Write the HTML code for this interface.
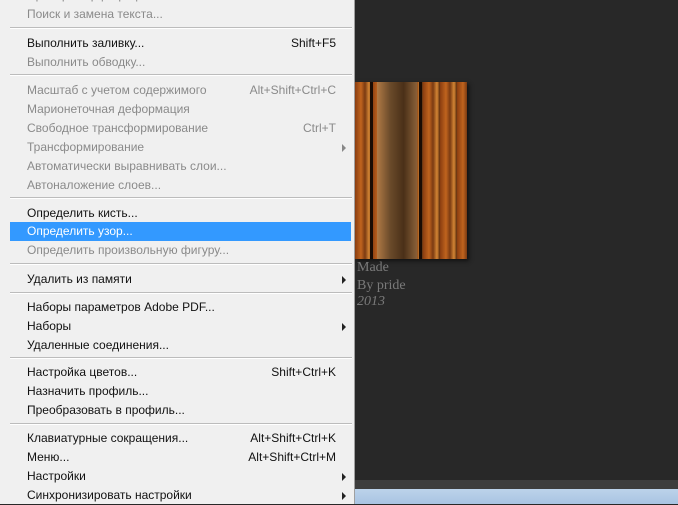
<!DOCTYPE html>
<html><head><meta charset="utf-8"><style>
body{margin:0;width:678px;height:504px;background:#282828;position:relative;overflow:hidden;font-family:"Liberation Sans","Noto Sans CJK SC",sans-serif;font-size:12px}
#menu{position:absolute;left:0;top:0;width:354px;height:504px;background:#f0f0f0;border-right:1px solid #a0a0a0}
.r{position:absolute;left:0;width:354px;height:19px;line-height:19px}
.r span.t{position:absolute;left:27px}
.r span.k{position:absolute;right:18px}
.r.d{color:#8a8a8a}.r{color:#111}
.hl{position:absolute;left:10px;top:222px;width:341px;height:19px;background:#3399ff}
.r.h{color:#fff}
.a{position:absolute;right:8px;top:6px;width:0;height:0;border-left:4px solid #222;border-top:4px solid transparent;border-bottom:4px solid transparent}
.d .a{border-left-color:#888}
.s{position:absolute;left:10px;width:342px;height:1px;background:#bcbcbc;border-bottom:1px solid #fff}
#bar{position:absolute;left:0;top:480px;width:678px;height:9px;background:#3d3d3d}
#task{position:absolute;left:0;top:489px;width:678px;height:15px;background:linear-gradient(#bcd3ea,#a9c4e2)}
#img{position:absolute;left:355px;top:82px;width:112px;height:177px;background:repeating-linear-gradient(90deg,#8a3d10 0,#c0641e 6px,#7a3a12 10px,#d38634 14px,#5a2a0c 17px);box-shadow:2px 2px 4px #111}
.w{position:absolute;left:357px;color:#7a7a7a;font-family:"Liberation Serif",serif;font-size:14px}
</style></head><body>
<div id="img"><div style="position:absolute;left:15px;top:0;width:3px;height:177px;background:#1a0c04"></div><div style="position:absolute;left:64px;top:0;width:3px;height:177px;background:#1a0c04"></div><div style="position:absolute;left:22px;top:0;width:40px;height:177px;background:linear-gradient(90deg,#b07a45,#6a4a2a,#4a3018,#8a6038)"></div></div>
<div class="w" style="top:260px">Made</div>
<div class="w" style="top:278px">By pride</div>
<div class="w" style="top:294px;font-style:italic">2013</div>
<div id="bar"></div><div id="task"></div>
<div id="menu">
<div class="hl"></div>
<div class="r d" style="top:-14px"><span class="t">Проверка орфографии...</span></div>
<div class="r d" style="top:5px"><span class="t">Поиск и замена текста...</span></div>
<div class="s" style="top:27px"></div>
<div class="r" style="top:34px"><span class="t">Выполнить заливку...</span><span class="k">Shift+F5</span></div>
<div class="r d" style="top:53px"><span class="t">Выполнить обводку...</span></div>
<div class="s" style="top:74px"></div>
<div class="r d" style="top:81px"><span class="t">Масштаб с учетом содержимого</span><span class="k">Alt+Shift+Ctrl+C</span></div>
<div class="r d" style="top:100px"><span class="t">Марионеточная деформация</span></div>
<div class="r d" style="top:119px"><span class="t">Свободное трансформирование</span><span class="k">Ctrl+T</span></div>
<div class="r d" style="top:138px"><span class="t">Трансформирование</span><i class="a"></i></div>
<div class="r d" style="top:157px"><span class="t">Автоматически выравнивать слои...</span></div>
<div class="r d" style="top:176px"><span class="t">Автоналожение слоев...</span></div>
<div class="s" style="top:197px"></div>
<div class="r" style="top:204px"><span class="t">Определить кисть...</span></div>
<div class="r h" style="top:222px"><span class="t">Определить узор...</span></div>
<div class="r d" style="top:241px"><span class="t">Определить произвольную фигуру...</span></div>
<div class="s" style="top:263px"></div>
<div class="r" style="top:270px"><span class="t">Удалить из памяти</span><i class="a"></i></div>
<div class="s" style="top:292px"></div>
<div class="r" style="top:298px"><span class="t">Наборы параметров Adobe PDF...</span></div>
<div class="r" style="top:317px"><span class="t">Наборы</span><i class="a"></i></div>
<div class="r" style="top:336px"><span class="t">Удаленные соединения...</span></div>
<div class="s" style="top:357px"></div>
<div class="r" style="top:363px"><span class="t">Настройка цветов...</span><span class="k">Shift+Ctrl+K</span></div>
<div class="r" style="top:382px"><span class="t">Назначить профиль...</span></div>
<div class="r" style="top:401px"><span class="t">Преобразовать в профиль...</span></div>
<div class="s" style="top:423px"></div>
<div class="r" style="top:429px"><span class="t">Клавиатурные сокращения...</span><span class="k">Alt+Shift+Ctrl+K</span></div>
<div class="r" style="top:448px"><span class="t">Меню...</span><span class="k">Alt+Shift+Ctrl+M</span></div>
<div class="r" style="top:467px"><span class="t">Настройки</span><i class="a"></i></div>
<div class="r" style="top:486px"><span class="t">Синхронизировать настройки</span><i class="a"></i></div>
</div>
</body></html>
